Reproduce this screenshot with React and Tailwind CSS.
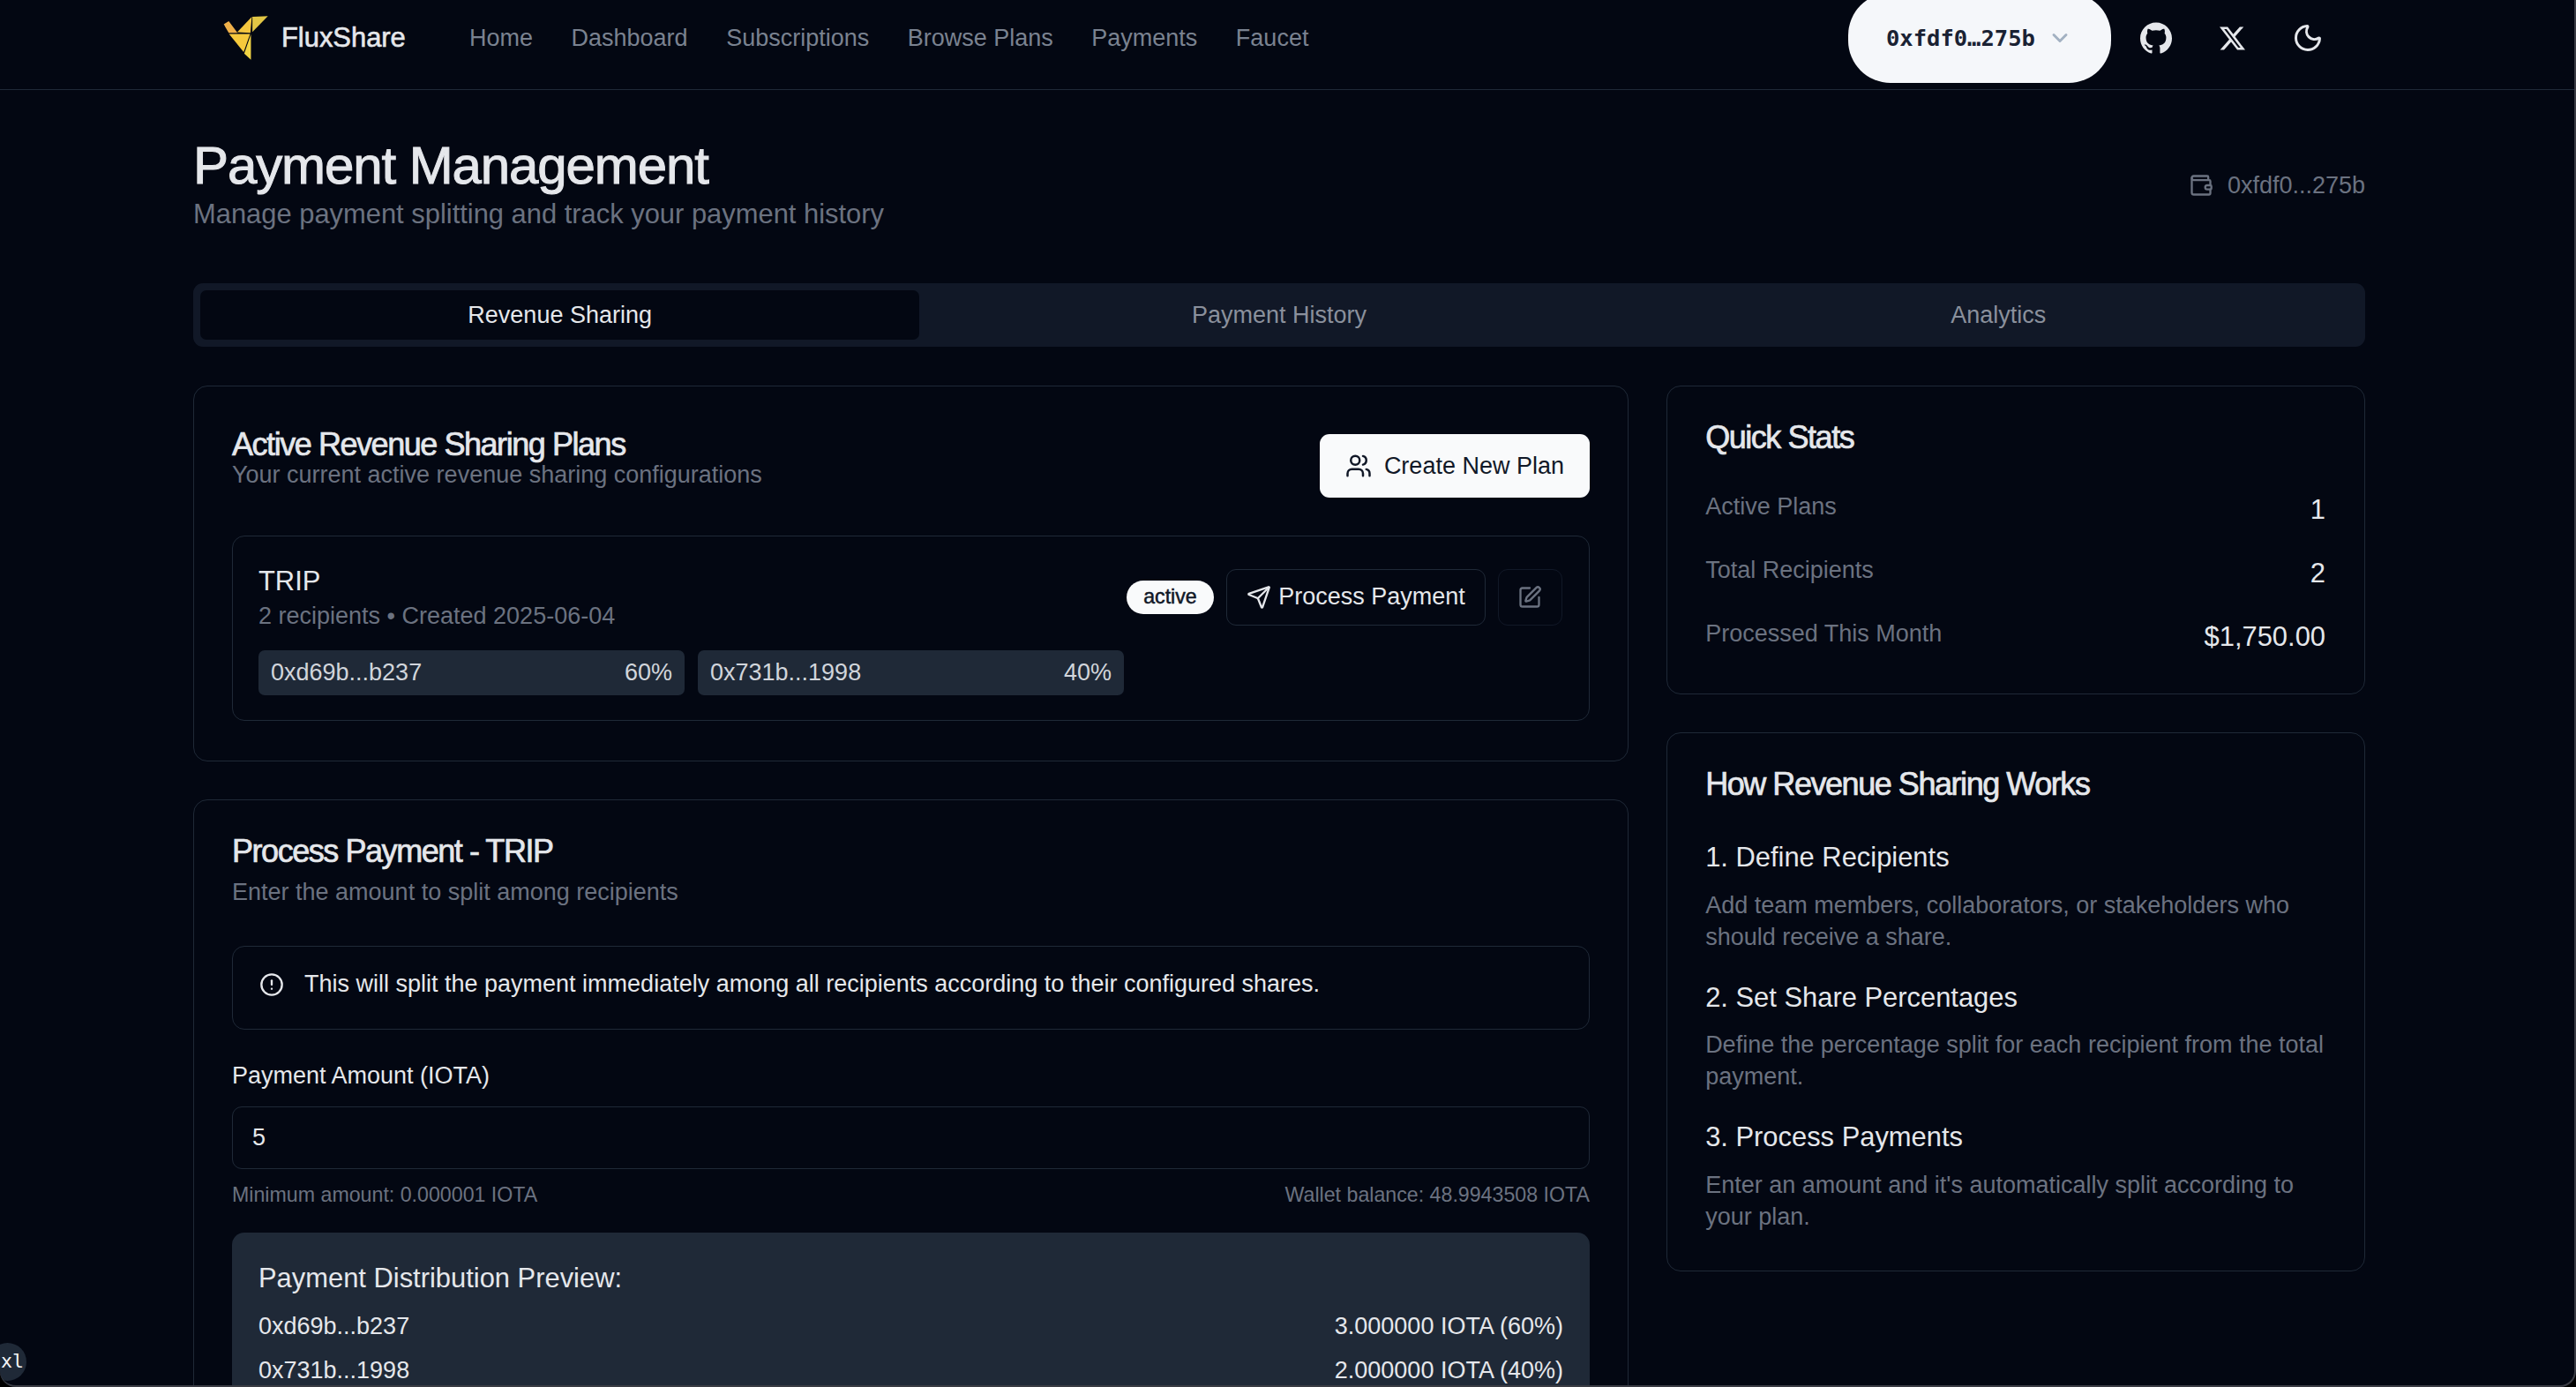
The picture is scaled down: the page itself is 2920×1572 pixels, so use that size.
import { Users, Send, SquarePen, CircleAlert, Wallet, ChevronDown, Moon } from 'lucide-react';
import { SiGithub, SiX } from 'react-icons/si';

const navLinks = ['Home', 'Dashboard', 'Subscriptions', 'Browse Plans', 'Payments', 'Faucet'];

const steps = [
  { title: '1. Define Recipients', text: 'Add team members, collaborators, or stakeholders who should receive a share.' },
  { title: '2. Set Share Percentages', text: 'Define the percentage split for each recipient from the total payment.' },
  { title: '3. Process Payments', text: "Enter an amount and it's automatically split according to your plan." },
];

const stats = [
  { label: 'Active Plans', value: '1' },
  { label: 'Total Recipients', value: '2' },
  { label: 'Processed This Month', value: '$1,750.00' },
];

const headingClass = 'text-[36px] font-normal tracking-[-1.45px] [-webkit-text-stroke:0.7px_currentColor] text-[#e5e7eb]';

function Logo() {
  return (
    <svg viewBox="60 25 160 155" className="w-[53px] h-[52px] shrink-0">
      <polygon points="65,56 82,45 112,85 82,85" fill="#efb04a" />
      <polygon points="111,83 161,30 156,85" fill="#f4c63f" />
      <polygon points="163,30 216,28 163,82" fill="#e2c645" />
      <polygon points="83,89 155,89 133,151" fill="#f6c93c" />
      <polygon points="158,90 158,177 135,156" fill="#f2d444" />
    </svg>
  );
}

function Nav() {
  return (
    <nav className="h-[102px] border-b border-[#1f2937]">
      <div className="h-[86px] flex items-center pl-[252px]">
        <Logo />
        <span className="ml-[14px] w-[139px] text-[30.9px] whitespace-nowrap [-webkit-text-stroke:0.6px_currentColor] text-[#e5e7eb]">FluxShare</span>
        <div className="ml-[74px] flex gap-[43.5px] text-[27px] text-[#7a8290]">
          {navLinks.map((link) => (
            <span key={link}>{link}</span>
          ))}
        </div>
        <button className="ml-auto h-[102px] w-[298px] shrink-0 rounded-[48px] bg-[#f5f7fa] flex items-center pl-[43px] text-[#1a2233]">
          <span className="font-['DejaVu_Sans_Mono',monospace] font-bold text-[25.5px]">0xfdf0…275b</span>
          <ChevronDown className="ml-[14px] text-[#a3b1c2]" size={28} strokeWidth={2.5} />
        </button>
        <div className="ml-[33px] mr-[286px] flex items-center text-[#e5e7eb]">
          <SiGithub size={36} />
          <SiX size={29} className="ml-[54px]" />
          <Moon size={36} className="ml-[53px]" />
        </div>
      </div>
    </nav>
  );
}

function PlanCard() {
  return (
    <div className="h-[426px] rounded-[16px] border border-[#1f2937] px-[43px] pt-[43px]">
      <div className="h-[126px] flex justify-between items-start">
        <div>
          <h2 className={`${headingClass} leading-[39px] mt-[3px]`}>Active Revenue Sharing Plans</h2>
          <p className="-mt-[3px] text-[27px] leading-[36px] text-[#6b7280]">Your current active revenue sharing configurations</p>
        </div>
        <button className="mt-[11px] w-[306px] h-[72px] rounded-[11px] bg-[#f9fafb] flex items-center justify-center gap-[14px] text-[#111827] text-[27px]">
          <Users size={30} />
          Create New Plan
        </button>
      </div>
      <div className="h-[210px] rounded-[14px] border border-[#1f2937] pl-[29px] pr-[30px] pt-[29px]">
        <div className="flex justify-between items-center">
          <div>
            <div className="text-[30.9px] leading-[43px] text-[#e5e7eb]">TRIP</div>
            <div className="text-[27px] leading-[36px] text-[#6b7280]">2 recipients • Created 2025-06-04</div>
          </div>
          <div className="flex items-center gap-[14px]">
            <span className="h-[38px] w-[99px] rounded-full bg-[#f9fafb] flex items-center justify-center text-[23.2px] [-webkit-text-stroke:0.5px_currentColor] text-[#111827]">active</span>
            <button className="h-[64px] w-[294px] rounded-[11px] border border-[#1f2937] flex items-center justify-center gap-[8px] text-[27px] text-[#e5e7eb]">
              <Send size={28} />
              Process Payment
            </button>
            <button className="h-[64px] w-[73px] rounded-[11px] border border-[#111827] flex items-center justify-center text-[#6b7280]">
              <SquarePen size={28} />
            </button>
          </div>
        </div>
        <div className="mt-[21px] flex gap-[15px]">
          {[['0xd69b...b237', '60%'], ['0x731b...1998', '40%']].map(([addr, pct]) => (
            <div key={addr} className="w-[483px] h-[51px] rounded-[7px] bg-[#1f2937] px-[14px] flex items-center justify-between text-[27px] text-[#d1d5db]">
              <span>{addr}</span>
              <span>{pct}</span>
            </div>
          ))}
        </div>
      </div>
    </div>
  );
}

function ProcessCard() {
  return (
    <div className="mt-[43px] rounded-t-[16px] border border-[#1f2937] px-[43px] pt-[40px] pb-[43px]">
      <h2 className={`${headingClass} leading-[36px]`}>Process Payment - TRIP</h2>
      <p className="mt-[10px] text-[27px] leading-[36px] text-[#6b7280]">Enter the amount to split among recipients</p>
      <div className="mt-[43px] h-[95px] rounded-[14px] border border-[#1f2937] px-[30px] pb-[8px] flex items-center gap-[23px] text-[27px] text-[#e5e7eb]">
        <CircleAlert size={28} />
        This will split the payment immediately among all recipients according to their configured shares.
      </div>
      <label className="block mt-[34px] text-[27px] leading-[36px] text-[#e5e7eb]">Payment Amount (IOTA)</label>
      <div className="mt-[17px] h-[71px] rounded-[11px] border border-[#1f2937] px-[22px] flex items-center text-[27px] text-[#e5e7eb]">5</div>
      <div className="mt-[15px] flex justify-between text-[23.2px] leading-[29px] text-[#6b7280]">
        <span>Minimum amount: 0.000001 IOTA</span>
        <span>Wallet balance: 48.9943508 IOTA</span>
      </div>
      <div className="mt-[28px] rounded-[14px] bg-[#1f2937] px-[30px] pt-[30px] pb-[30px] text-[#e5e7eb]">
        <div className="text-[30.9px] leading-[43px]">Payment Distribution Preview:</div>
        <div className="mt-[15px] flex justify-between text-[27px] leading-[36px]">
          <span>0xd69b...b237</span>
          <span>3.000000 IOTA (60%)</span>
        </div>
        <div className="mt-[14px] flex justify-between text-[27px] leading-[36px]">
          <span>0x731b...1998</span>
          <span>2.000000 IOTA (40%)</span>
        </div>
      </div>
    </div>
  );
}

function QuickStats() {
  return (
    <div className="rounded-[16px] border border-[#1f2937] pl-[43px] pr-[44px] pt-[43px] pb-[43px]">
      <h3 className={`${headingClass} leading-[29px]`}>Quick Stats</h3>
      <div className="mt-[46px] flex flex-col gap-[28.8px]">
        {stats.map((s) => (
          <div key={s.label} className="flex justify-between items-start">
            <span className="text-[27px] leading-[36px] text-[#6b7280]">{s.label}</span>
            <span className="text-[30.9px] leading-[43.2px] text-[#e5e7eb]">{s.value}</span>
          </div>
        ))}
      </div>
    </div>
  );
}

function HowItWorks() {
  return (
    <div className="mt-[43px] rounded-[16px] border border-[#1f2937] pl-[43px] pr-[44px] pt-[43px] pb-[43px]">
      <h3 className={`${headingClass} leading-[29px]`}>How Revenue Sharing Works</h3>
      <div className="mt-[47px] flex flex-col gap-[28.8px]">
        {steps.map((s) => (
          <div key={s.title}>
            <div className="text-[30.9px] leading-[43.2px] text-[#e5e7eb]">{s.title}</div>
            <p className="mt-[14.4px] text-[27px] leading-[36px] text-[#6b7280]">{s.text}</p>
          </div>
        ))}
      </div>
    </div>
  );
}

export default function App() {
  return (
    <div className="relative h-screen overflow-hidden bg-[#030712] font-['Liberation_Sans',Arial,sans-serif]">
      <Nav />
      <main className="ml-[219px] w-[2462px]">
        <div className="pt-[53px] flex justify-between items-center">
          <div>
            <h1 className="text-[60px] leading-[65px] tracking-[-1.1px] [-webkit-text-stroke:1px_currentColor] text-[#e5e7eb]">Payment Management</h1>
            <p className="mt-[1px] text-[30.9px] leading-[44px] text-[#6b7280]">Manage payment splitting and track your payment history</p>
          </div>
          <div className="flex items-center gap-[16px] text-[27px] text-[#6b7280]">
            <Wallet size={28} />
            0xfdf0...275b
          </div>
        </div>

        <div className="mt-[56px] h-[72px] rounded-[11px] bg-[#111827] p-[8px] grid grid-cols-3 text-[27px]">
          <div className="rounded-[7px] bg-[#030712] flex items-center justify-center text-[#e5e7eb]">Revenue Sharing</div>
          <div className="flex items-center justify-center text-[#8a909c]">Payment History</div>
          <div className="flex items-center justify-center text-[#8a909c]">Analytics</div>
        </div>

        <div className="mt-[44px] grid grid-cols-3 gap-[43.2px]">
          <div className="col-span-2">
            <PlanCard />
            <ProcessCard />
          </div>
          <div>
            <QuickStats />
            <HowItWorks />
          </div>
        </div>
      </main>

      {/* dev breakpoint badge */}
      <div className="absolute left-[-13px] top-[1522px] size-[43px] rounded-full bg-[#1f2937] flex items-center justify-end pr-[3px] font-['DejaVu_Sans_Mono',monospace] text-[21.6px] text-[#f3f4f6]">xl</div>
      {/* window frame */}
      <div className="pointer-events-none absolute inset-0 rounded-b-[18px] border-r-2 border-b-2 border-[#3a3c44] shadow-[0_0_0_30px_#000]" />
    </div>
  );
}
